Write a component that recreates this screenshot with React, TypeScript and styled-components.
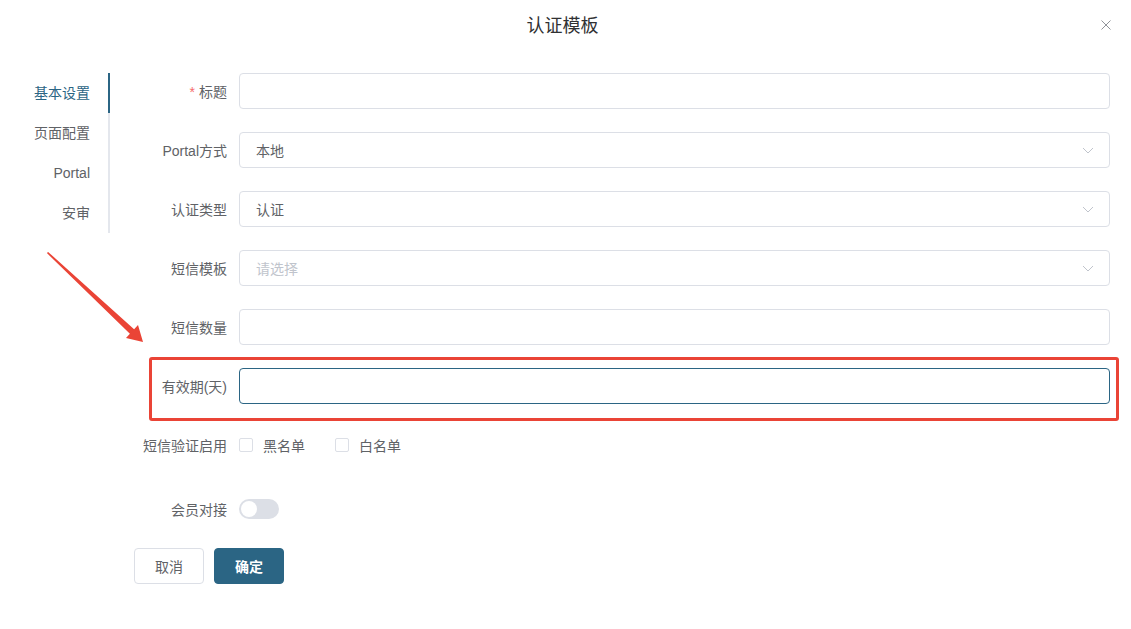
import React, { useState } from 'react';
import styled, { createGlobalStyle } from 'styled-components';

const GlobalStyle = createGlobalStyle`
  html, body {
    margin: 0;
    padding: 0;
    background: #fff;
  }
  body {
    font-family: "Liberation Sans", "Noto Sans CJK SC", sans-serif;
    color: #606266;
  }
`;

const Dialog = styled.div`
  position: relative;
  width: 1131px;
  height: 629px;
  background: #fff;
  box-sizing: border-box;
`;

const Header = styled.div`
  height: 50px;
  padding-top: 2px;
  box-sizing: border-box;
  display: flex;
  align-items: center;
  justify-content: center;
  position: relative;
`;

const Title = styled.div`
  font-size: 18px;
  color: #303133;
  line-height: 24px;
  margin-right: 6px;
`;

const CloseButton = styled.button`
  position: absolute;
  right: 19px;
  top: 19px;
  width: 12px;
  height: 12px;
  padding: 0;
  border: none;
  background: none;
  cursor: pointer;
  display: flex;
`;

const Body = styled.div`
  display: flex;
  padding-top: 23px;
`;

const Nav = styled.div`
  width: 110px;
  height: 160px;
  border-right: 2px solid #e4e7ed;
  box-sizing: border-box;
  flex-shrink: 0;
`;

const NavItem = styled.div<{ $active?: boolean }>`
  height: 40px;
  line-height: 40px;
  padding-right: 18px;
  text-align: right;
  font-size: 14px;
  color: ${(p) => (p.$active ? '#2b6584' : '#606266')};
  position: relative;
  cursor: pointer;

  &::after {
    content: '';
    display: ${(p) => (p.$active ? 'block' : 'none')};
    position: absolute;
    right: -2px;
    top: 0;
    width: 2px;
    height: 40px;
    background: #2b6584;
  }
`;

const Form = styled.div`
  flex: 1;
  margin-left: 24px;
  margin-right: 21px;
`;

const Row = styled.div<{ $gap?: number }>`
  display: flex;
  align-items: center;
  height: 36px;
  margin-bottom: ${(p) => p.$gap ?? 23}px;
  position: relative;
`;

const Label = styled.label`
  width: 105px;
  padding-right: 12px;
  box-sizing: border-box;
  text-align: right;
  font-size: 14px;
  color: #606266;
  flex-shrink: 0;
  white-space: nowrap;
`;

const Star = styled.span`
  color: #f56c6c;
  margin-right: 4px;
`;

const Input = styled.div<{ $focus?: boolean }>`
  flex: 1;
  height: 36px;
  box-sizing: border-box;
  border: 1px solid ${(p) => (p.$focus ? '#2b6584' : '#dcdfe6')};
  border-radius: 4px;
  display: flex;
  align-items: center;
  justify-content: space-between;
  padding: 0 15px 0 16px;
  font-size: 14px;
`;

const Value = styled.span<{ $placeholder?: boolean }>`
  color: ${(p) => (p.$placeholder ? '#c0c4cc' : '#606266')};
`;

const Highlight = styled.div`
  position: absolute;
  left: 15px;
  right: -9px;
  top: -11px;
  bottom: -17px;
  border: 3px solid #ea4436;
  border-radius: 3px;
  pointer-events: none;
`;

const CheckGroup = styled.div`
  display: flex;
  align-items: center;
`;

const Check = styled.label`
  display: flex;
  align-items: center;
  margin-right: 30px;
  font-size: 14px;
  color: #606266;
  cursor: pointer;
`;

const Box = styled.span`
  width: 14px;
  height: 14px;
  box-sizing: border-box;
  border: 1px solid #dcdfe6;
  border-radius: 2px;
  margin-right: 10px;
`;

const Switch = styled.span`
  width: 40px;
  height: 20px;
  border-radius: 10px;
  background: #dcdfe6;
  position: relative;

  &::after {
    content: '';
    position: absolute;
    left: 2px;
    top: 2px;
    width: 16px;
    height: 16px;
    border-radius: 50%;
    background: #fff;
  }
`;

const Actions = styled.div`
  display: flex;
  gap: 10px;
`;

const Button = styled.button<{ $primary?: boolean }>`
  height: 36px;
  padding: 0 20px;
  font-size: 14px;
  font-family: inherit;
  border-radius: 4px;
  border: 1px solid ${(p) => (p.$primary ? '#2b6584' : '#dcdfe6')};
  background: ${(p) => (p.$primary ? '#2b6584' : '#fff')};
  color: ${(p) => (p.$primary ? '#fff' : '#606266')};
  font-weight: ${(p) => (p.$primary ? 700 : 400)};
  cursor: pointer;
  width: 70px;
`;

const ArrowLayer = styled.svg`
  position: absolute;
  left: 0;
  top: 0;
  pointer-events: none;
`;

const Chevron = () => (
  <svg width="12" height="7" viewBox="0 0 12 7">
    <path d="M1 1 L6 6 L11 1" fill="none" stroke="#c0c4cc" strokeWidth="1" />
  </svg>
);

const navItems = ['基本设置', '页面配置', 'Portal', '安审'];

export default function App() {
  const [active, setActive] = useState(0);

  return (
    <Dialog>
      <GlobalStyle />
      <Header>
        <Title>认证模板</Title>
        <CloseButton>
          <svg width="12" height="12" viewBox="0 0 12 12">
            <path d="M1.5 1.5 L10.5 10.5 M10.5 1.5 L1.5 10.5" stroke="#909399" strokeWidth="1" />
          </svg>
        </CloseButton>
      </Header>
      <Body>
        <Nav>
          {navItems.map((n, i) => (
            <NavItem key={n} $active={i === active} onClick={() => setActive(i)}>
              {n}
            </NavItem>
          ))}
        </Nav>
        <Form>
          <Row>
            <Label>
              <Star>*</Star>标题
            </Label>
            <Input />
          </Row>
          <Row>
            <Label>Portal方式</Label>
            <Input>
              <Value>本地</Value>
              <Chevron />
            </Input>
          </Row>
          <Row>
            <Label>认证类型</Label>
            <Input>
              <Value>认证</Value>
              <Chevron />
            </Input>
          </Row>
          <Row>
            <Label>短信模板</Label>
            <Input>
              <Value $placeholder>请选择</Value>
              <Chevron />
            </Input>
          </Row>
          <Row>
            <Label>短信数量</Label>
            <Input />
          </Row>
          <Row>
            <Label>有效期(天)</Label>
            <Input $focus />
            <Highlight />
          </Row>
          <Row $gap={28}>
            <Label>短信验证启用</Label>
            <CheckGroup>
              <Check>
                <Box />
                黑名单
              </Check>
              <Check>
                <Box />
                白名单
              </Check>
            </CheckGroup>
          </Row>
          <Row $gap={21}>
            <Label>会员对接</Label>
            <Switch />
          </Row>
          <Actions>
            <Button>取消</Button>
            <Button $primary>确定</Button>
          </Actions>
        </Form>
      </Body>
      <ArrowLayer width="1131" height="629" viewBox="0 0 1131 629">
        <polygon
          points="48.1,251.9 134.1,329.3 138,325 143,342 126,338 129.9,333.7 46.9,253.1"
          fill="#ea4436"
        />
      </ArrowLayer>
    </Dialog>
  );
}
